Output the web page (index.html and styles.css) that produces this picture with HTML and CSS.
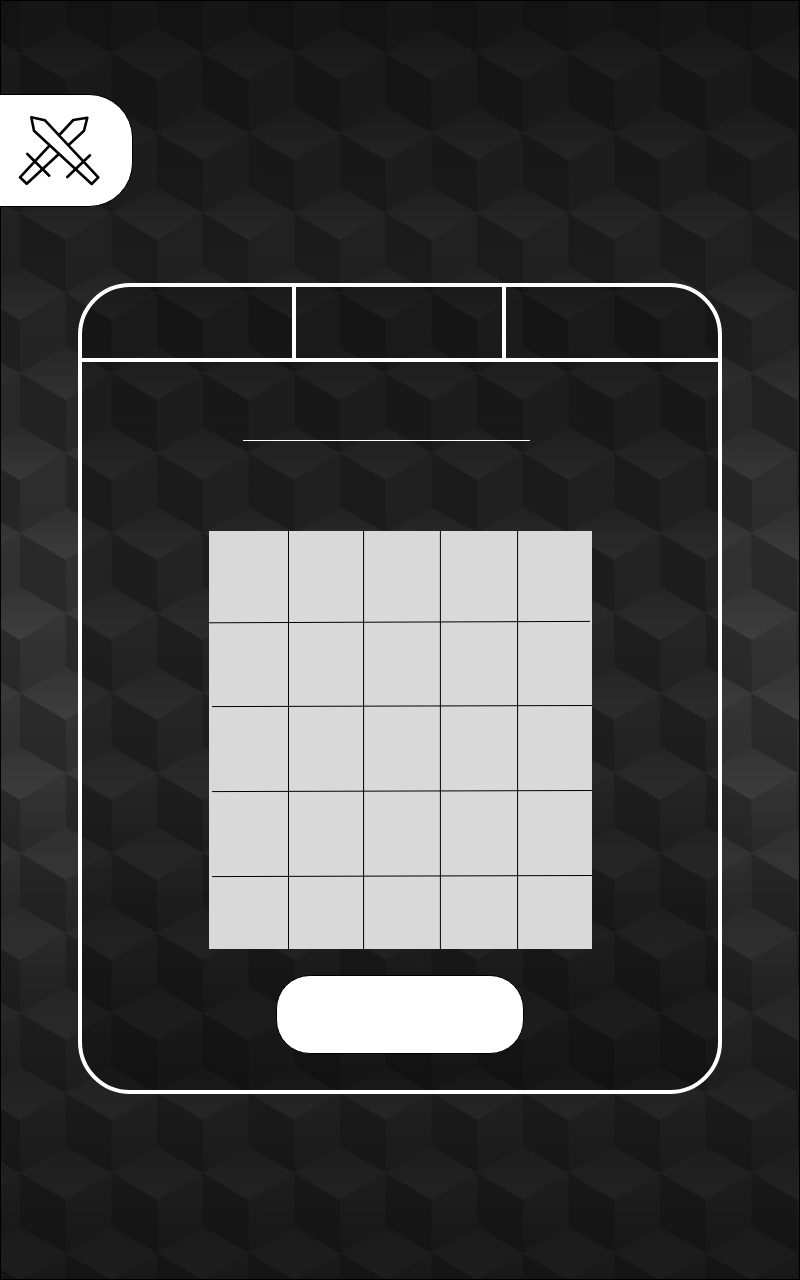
FILE: index.html
```html
<!DOCTYPE html>
<html lang="en">
<head>
<meta charset="utf-8">
<meta name="viewport" content="width=device-width, initial-scale=1">
<title>Battle board</title>
<link rel="stylesheet" href="styles.css">
</head>
<body>
<div class="backdrop" aria-hidden="true">
  <svg class="cubes" width="100%" height="100%">
    <defs>
      <linearGradient id="top" x1="0" y1="0" x2="0" y2="1"><stop offset="0" stop-color="#333"/><stop offset="1" stop-color="#3e3e3e"/></linearGradient>
      <linearGradient id="left" x1="0" y1="0" x2="0" y2="1"><stop offset="0" stop-color="#2b2b2b"/><stop offset="1" stop-color="#282828"/></linearGradient>
      <linearGradient id="right" x1="0" y1="0" x2="0" y2="1"><stop offset="0" stop-color="#353535"/><stop offset="1" stop-color="#2e2e2e"/></linearGradient>
      <g id="cube">
        <path fill="url(#left)" d="M0 0 45.7 27V80L0 54Z"/>
        <path fill="url(#right)" d="M91.4 0 45.7 27V80L91.4 54Z"/>
        <path fill="url(#top)" d="M0 0 45.7-26 91.4 0 45.7 27Z"/>
      </g>
      <pattern id="tiles" x="20" y="53" width="91.43" height="160" patternUnits="userSpaceOnUse">
        <rect width="92" height="160" fill="#2e2e2e"/>
        <use href="#cube" x="-45.7" y="-80"/>
        <use href="#cube" x="45.7" y="-80"/>
        <use href="#cube"/>
        <use href="#cube" x="-45.7" y="80"/>
        <use href="#cube" x="45.7" y="80"/>
        <use href="#cube" y="160"/>
      </pattern>
    </defs>
    <rect width="100%" height="100%" fill="url(#tiles)"/>
  </svg>
</div>
<main class="page">
  <button class="battle" type="button" aria-label="Battle">
    <svg class="swords" viewBox="0 0 82 73" aria-hidden="true">
      <g fill="#fff" stroke="#000" stroke-width="2.6" stroke-linejoin="round" stroke-linecap="round">
        <path d="M2 63.3 55.3 6 69.3 3.7 66 16.7 8.7 69.7Z"/>
        <path d="M9.3 40 31.3 61.7"/>
        <path d="M13.3 3.3 27 6.3 80.3 63.3 73.7 70 16 16.7Z"/>
        <path d="M72 41.3 49.3 63"/>
      </g>
    </svg>
  </button>
  <section class="panel">
    <nav class="tabs" aria-label="Sections">
      <button class="tab" type="button" aria-label="First section"></button>
      <button class="tab" type="button" aria-label="Second section"></button>
      <button class="tab" type="button" aria-label="Third section"></button>
    </nav>
    <form class="content">
      <div class="field"><input class="name" type="text" aria-label="Name"></div>
      <svg class="board" viewBox="0 0 383 418" role="img" aria-label="Board">
        <g stroke="#000" stroke-width="1">
          <path d="M79.5 0V418M154.6 0V418M231.4 0V418M308.6 0V418"/>
          <path d="M0 91.8 381 90.4M3 175.6 383 174.5M3 260.6 383 259.5M3 345.6 383 344.5"/>
        </g>
      </svg>
      <button class="submit" type="button" aria-label="Confirm"></button>
    </form>
  </section>
</main>
</body>
</html>
```
FILE: styles.css
```css
* { box-sizing: border-box; }
body {
  margin: 0;
  background: #1b1b1b;
  font-family: "Liberation Sans", sans-serif;
}
button { padding: 0; cursor: pointer; }
.backdrop {
  position: absolute;
  inset: 0;
  z-index: -1;
}
.backdrop::after {
  content: "";
  position: absolute;
  inset: 0;
  border: 1px solid #000;
  background: linear-gradient(rgba(0,0,0,.57), rgba(0,0,0,.32) 22%, rgba(0,0,0,0) 46%, rgba(0,0,0,0) 60%, rgba(0,0,0,.32) 80%, rgba(0,0,0,.52));
}
.cubes { display: block; }
.page {
  position: relative;
  min-height: 100vh;
  padding: 94px 0;
}
.battle {
  display: flex;
  align-items: center;
  width: 133px;
  height: 113px;
  padding-left: 18px;
  background: #fff;
  border: 1px solid #000;
  border-left: 0;
  border-radius: 0 44px 44px 0;
}
.swords { width: 82px; height: 73px; }
.panel {
  margin: 76px 78px 0;
  border: 4px solid #fff;
  border-radius: 52px;
  background: rgba(0,0,0,.27);
  overflow: hidden;
}
.tabs {
  display: grid;
  grid-template-columns: 214fr 210fr 212fr;
  height: 75px;
  border-bottom: 4px solid #fff;
}
.tab { border: 0; background: none; }
.tab:not(:last-child) { border-right: 4px solid #fff; }
.content {
  display: flex;
  flex-direction: column;
  align-items: center;
  padding: 40px 0 36px;
}
.field { width: 100%; padding: 0 188px 0 161px; }
.name {
  display: block;
  width: 100%;
  height: 39px;
  padding: 0;
  border: 0;
  border-bottom: 1px solid #fff;
  background: none;
  color: #fff;
  font-size: 24px;
}
.board {
  display: block;
  width: 383px;
  max-width: 100%;
  margin-top: 90px;
  background: #d9d9d9;
}
.submit {
  width: 248px;
  height: 79px;
  margin-top: 26px;
  background: #fff;
  border: 1px solid #000;
  border-radius: 34px;
}
```
